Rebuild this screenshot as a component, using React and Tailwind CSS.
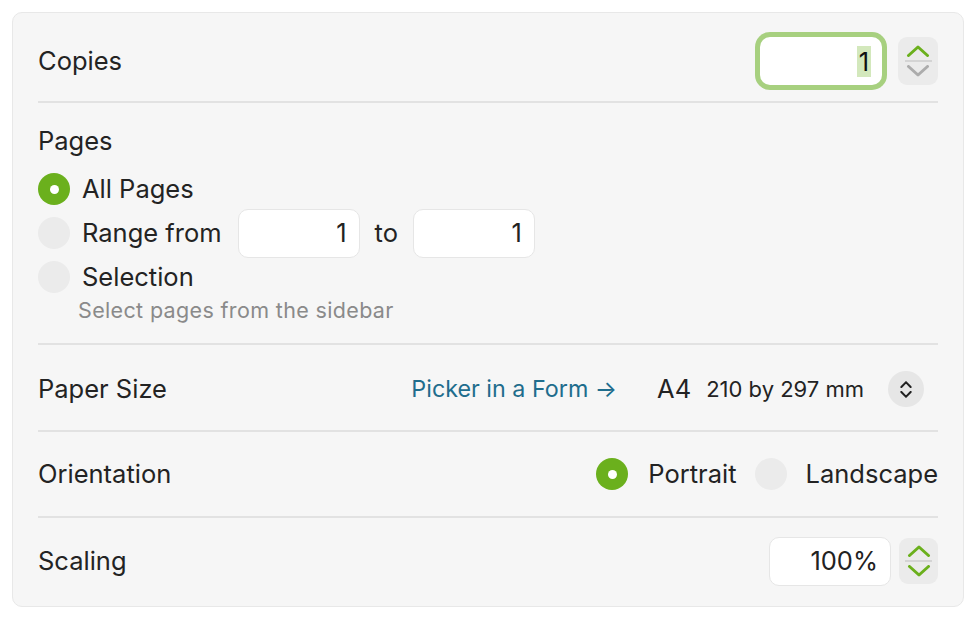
import React from 'react';

const GREEN = '#6bb01d';

// Small chevron drawing used by the steppers
const Chevron = ({ dir = 'up', color = GREEN, w = 24, h = 12, sw = 3 }) => (
  <svg width={w} height={h} viewBox="0 0 24 12" fill="none" preserveAspectRatio="none">
    <polyline
      points={dir === 'up' ? '2.5,10.5 12,2 21.5,10.5' : '2.5,1.5 12,10 21.5,1.5'}
      stroke={color}
      strokeWidth={sw}
      strokeLinecap="round"
      strokeLinejoin="round"
    />
  </svg>
);

const Stepper = ({ upColor = GREEN, downColor = GREEN, className = '' }) => (
  <div className={`flex flex-col items-center justify-center rounded-[9px] bg-[#ebebeb] ${className}`}>
    <Chevron dir="up" color={upColor} />
    <div className="my-[3px] h-[2px] w-[27px] bg-[#d4d4d4]" />
    <Chevron dir="down" color={downColor} />
  </div>
);

const Radio = ({ checked }) =>
  checked ? (
    <div className="flex h-[32px] w-[32px] shrink-0 items-center justify-center rounded-full bg-[#6bb01d]">
      <div className="h-[9px] w-[9px] rounded-full bg-white" />
    </div>
  ) : (
    <div className="h-[32px] w-[32px] shrink-0 rounded-full bg-[#ebebeb]" />
  );

const Field = ({ value, className = '' }) => (
  <div
    className={`flex h-[49px] w-[122px] items-center justify-end rounded-[10px] border border-[#e6e6e6] bg-white pr-[12px] text-[25.5px] text-[#222] ${className}`}
  >
    {value}
  </div>
);

const Divider = () => <div className="h-[2px] bg-[#e2e2e2]" />;

export default function App() {
  return (
    <div
      className="min-h-screen bg-white p-[12px] pr-[16px] text-[#232323]"
      style={{ fontFamily: 'Inter, "Noto Sans", sans-serif' }}
    >
      <div className="rounded-[10px] border border-[#e8e8e8] bg-[#f6f6f6] px-[25px] pt-[8px] pb-[2px]">
        {/* Copies */}
        <div className="flex h-[80px] items-center justify-between">
          <span className="text-[25.5px]">Copies</span>
          <div className="flex items-center gap-[16px]">
            <div className="flex h-[48px] w-[122px] items-center justify-end rounded-[10px] bg-white pr-[11px] ring-[5px] ring-[#a7d07f]">
              <span className="bg-[#d3e8bc] px-[2px] text-[25.5px] leading-[31px] text-[#111]">1</span>
            </div>
            <Stepper downColor="#acacac" className="h-[48px] w-[40px]" />
          </div>
        </div>
        <Divider />

        {/* Pages */}
        <div className="pt-[22px] pb-[21px]">
          <div className="h-[32px] text-[25.5px] leading-[32px]">Pages</div>
          <div className="mt-[16px] flex h-[32px] items-center gap-[12px]">
            <Radio checked />
            <span className="text-[25.5px]">All Pages</span>
          </div>
          <div className="mt-[3px] flex h-[50px] items-center">
            <Radio />
            <span className="ml-[12px] text-[25.5px]">Range from</span>
            <Field value="1" className="ml-[16px]" />
            <span className="mx-[15px] text-[25.5px]">to</span>
            <Field value="1" />
          </div>
          <div className="mt-[3px] flex h-[32px] items-center gap-[12px]">
            <Radio />
            <span className="text-[25.5px]">Selection</span>
          </div>
          <div className="mt-[5px] pl-[40px] text-[21.5px] leading-[24px] tracking-[0.35px] text-[#8a8a8a]">
            Select pages from the sidebar
          </div>
        </div>
        <Divider />

        {/* Paper Size */}
        <div className="flex h-[85px] items-center justify-between pt-[3px]">
          <span className="text-[25.5px]">Paper Size</span>
          <div className="flex items-center">
            <span className="text-[23.3px] text-[#1f6d8d]">Picker in a Form →</span>
            <span className="ml-[40px] text-[25.5px]">A4</span>
            <span className="ml-[15px] text-[22px]">210 by 297 mm</span>
            <div className="ml-[24px] mr-[14px] flex h-[36px] w-[36px] flex-col items-center justify-center gap-[3px] rounded-full bg-[#e6e6e6]">
              <Chevron dir="up" color="#222" w={12} h={7} sw={3.6} />
              <Chevron dir="down" color="#222" w={12} h={7} sw={3.6} />
            </div>
          </div>
        </div>
        <Divider />

        {/* Orientation */}
        <div className="flex h-[84px] items-center justify-between">
          <span className="text-[25.5px]">Orientation</span>
          <div className="flex items-center">
            <Radio checked />
            <span className="ml-[20px] text-[25.5px]">Portrait</span>
            <div className="ml-[18px]">
              <Radio />
            </div>
            <span className="ml-[19px] text-[25.5px]">Landscape</span>
          </div>
        </div>
        <Divider />

        {/* Scaling */}
        <div className="flex h-[86px] items-center justify-between">
          <span className="text-[25.5px]">Scaling</span>
          <div className="flex items-center gap-[8px]">
            <Field value="100%" />
            <Stepper className="h-[46px] w-[39px]" />
          </div>
        </div>
      </div>
    </div>
  );
}
